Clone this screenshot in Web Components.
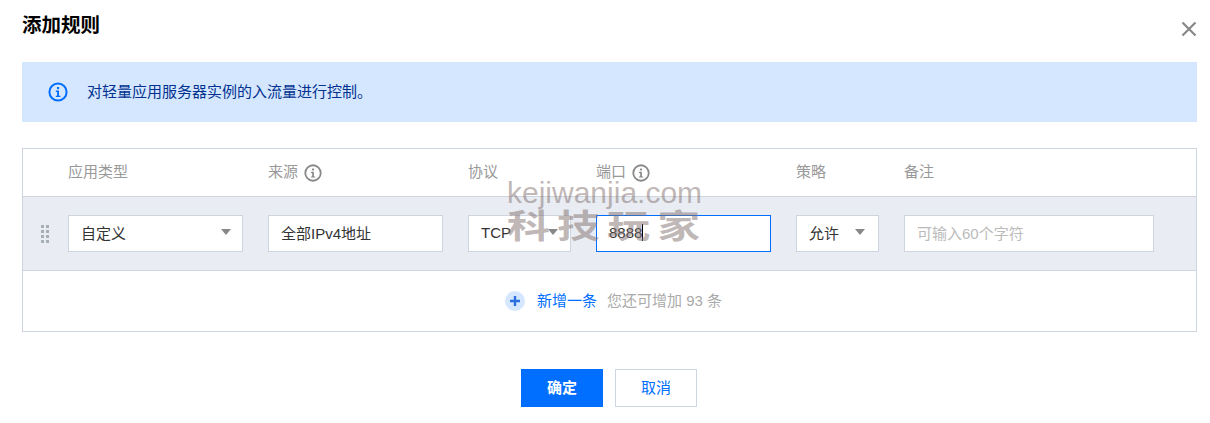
<!DOCTYPE html>
<html lang="zh-CN">
<head>
  <meta charset="UTF-8">
  <title>添加规则</title>
  <style>
    html, body { margin: 0; padding: 0; background: #fff; }
    body { font: 15px "Liberation Sans", "Noto Sans CJK SC", sans-serif; color: #333; }
  </style>
</head>
<body>

  <rule-dialog heading="添加规则">
    <info-banner>对轻量应用服务器实例的入流量进行控制。</info-banner>
    <rule-table>
      <rule-col slot="head" w="175">应用类型</rule-col>
      <rule-col slot="head" w="175" tip>来源</rule-col>
      <rule-col slot="head" w="103">协议</rule-col>
      <rule-col slot="head" w="175" tip>端口</rule-col>
      <rule-col slot="head" w="83">策略</rule-col>
      <rule-col slot="head" w="250">备注</rule-col>

      <tc-select slot="row" w="175" pad="11">自定义</tc-select>
      <tc-input slot="row" w="175">全部IPv4地址</tc-input>
      <tc-select slot="row" w="103" pad="12">TCP</tc-select>
      <tc-input slot="row" w="175" focused>8888</tc-input>
      <tc-select slot="row" w="83" pad="13">允许</tc-select>
      <tc-input slot="row" w="250" placeholder>可输入60个字符</tc-input>

      <add-row slot="foot" left="93"></add-row>
    </rule-table>
    <tc-button slot="actions" primary>确定</tc-button>
    <tc-button slot="actions">取消</tc-button>
  </rule-dialog>

  <script>
    const INFO_SVG = (color, size) => `
      <svg width="${size}" height="${size}" viewBox="0 0 20 20" style="display:block;flex:none">
        <circle cx="10" cy="10" r="8.6" fill="none" stroke="${color}" stroke-width="2"/>
        <rect x="9" y="5" width="2.1" height="2.2" fill="${color}"/>
        <path d="M7.8 8.6H11v5.2h1.4v1.3H7.8v-1.3H9.1V9.9H7.8z" fill="${color}"/>
      </svg>`

    class RuleDialog extends HTMLElement {
      constructor () {
        super()
        const root = this.attachShadow({ mode: 'open' })
        root.innerHTML = `
          <style>
            :host { display: block; position: relative; width: 1210px; height: 423px; padding: 0 13px 0 22px; box-sizing: border-box; overflow: hidden; }
            .head { display: flex; justify-content: space-between; height: 62px; }
            h2 { margin: 13px 0 0; font-size: 19.5px; line-height: 24px; font-weight: 700; color: #000; }
            .close { margin: 19px -2px 0 0; }
            .actions { display: flex; justify-content: center; gap: 12px; margin: 37px 1px 0 0; }
            .mark { position: absolute; left: 507px; top: 177px; color: rgba(130, 112, 112, .5); pointer-events: none; white-space: nowrap; }
            .mark .en { font: 30px/32px "Liberation Sans", sans-serif; }
            .mark .cn { font: 700 33px/36px "Noto Sans CJK SC", sans-serif; letter-spacing: 5.5px; margin-top: -3px; transform: scaleX(1.3); transform-origin: 0 50%; }
          </style>
          <div class="head">
            <h2>${this.getAttribute('heading')}</h2>
            <svg class="close" width="20" height="20" viewBox="0 0 20 20">
              <path d="M3.5 3.5l13 13M16.5 3.5l-13 13" stroke="#888" stroke-width="2.2" fill="none"/>
            </svg>
          </div>
          <slot></slot>
          <div class="actions"><slot name="actions"></slot></div>
          <div class="mark"><div class="en">kejiwanjia.com</div><div class="cn">科技玩家</div></div>`
      }
    }

    class InfoBanner extends HTMLElement {
      constructor () {
        super()
        const root = this.attachShadow({ mode: 'open' })
        root.innerHTML = `
          <style>
            :host { display: flex; align-items: center; gap: 19px; height: 60px; padding-left: 26px; background: #d5e7ff; color: #00318f; }
            span { padding-bottom: 3px; }
          </style>
          ${INFO_SVG('#006eff', 20)}
          <span><slot></slot></span>`
      }
    }

    class RuleTable extends HTMLElement {
      constructor () {
        super()
        const root = this.attachShadow({ mode: 'open' })
        root.innerHTML = `
          <style>
            :host { display: block; margin-top: 26px; border: 1px solid #cfd5de; height: 184px; box-sizing: border-box; }
            .line { display: flex; gap: 25px; padding-left: 45px; align-items: center; }
            .hd { height: 47px; }
            .row { position: relative; height: 75px; background: #e9edf3; border-top: 1px solid #cfd5de; border-bottom: 1px solid #cfd5de; box-sizing: border-box; padding-bottom: 1px; }
            .grip { position: absolute; left: 18px; top: 28px; display: grid; grid-template-columns: 3px 3px; gap: 2px; }
            .grip i { width: 3px; height: 3px; background: #a8aeb5; }
            .foot { display: flex; justify-content: center; align-items: center; height: 60px; }
          </style>
          <div class="line hd"><slot name="head"></slot></div>
          <div class="line row">
            <div class="grip"><i></i><i></i><i></i><i></i><i></i><i></i><i></i><i></i></div>
            <slot name="row"></slot>
          </div>
          <div class="foot"><slot name="foot"></slot></div>`
      }
    }

    class RuleCol extends HTMLElement {
      constructor () {
        super()
        const root = this.attachShadow({ mode: 'open' })
        const tip = this.hasAttribute('tip') ? INFO_SVG('#888', 18) : ''
        root.innerHTML = `
          <style>
            :host { display: flex; align-items: center; gap: 6px; width: ${this.getAttribute('w')}px; color: #999; }
            span { padding-bottom: 4px; }
          </style>
          <span><slot></slot></span>${tip}`
      }
    }

    class TcSelect extends HTMLElement {
      constructor () {
        super()
        const root = this.attachShadow({ mode: 'open' })
        root.innerHTML = `
          <style>
            :host { display: flex; align-items: center; justify-content: space-between; box-sizing: border-box; width: ${this.getAttribute('w')}px; height: 37px; padding: 0 ${this.getAttribute('pad')}px 0 12px; background: #fff; border: 1px solid #cfd5de; color: #333; }
            .text { padding-bottom: 1px; }
            .arrow { width: 0; height: 0; margin-bottom: 2px; border: 5px solid transparent; border-top: 6px solid #888; border-bottom: 0; }
          </style>
          <span class="text"><slot></slot></span><span class="arrow"></span>`
      }
    }

    class TcInput extends HTMLElement {
      constructor () {
        super()
        const root = this.attachShadow({ mode: 'open' })
        const focused = this.hasAttribute('focused')
        const ph = this.hasAttribute('placeholder')
        root.innerHTML = `
          <style>
            :host { display: flex; align-items: center; box-sizing: border-box; width: ${this.getAttribute('w')}px; height: 37px; padding: 0 12px; background: #fff; border: 1px solid ${focused ? '#006eff' : '#cfd5de'}; color: ${ph ? '#bbb' : '#333'}; }
            .text { padding-bottom: 1px; }
            .caret { padding-bottom: 0; margin-bottom: 1px; border-right: 1px solid #000; line-height: 17px; }
          </style>
          <span class="text ${focused ? 'caret' : ''}"><slot></slot></span>`
      }
    }

    class AddRow extends HTMLElement {
      constructor () {
        super()
        const root = this.attachShadow({ mode: 'open' })
        root.innerHTML = `
          <style>
            :host { display: flex; align-items: center; margin-left: 8px; }
            .plus { margin-right: 12px; }
            span { padding-bottom: 3px; }
            .link { color: #006eff; margin-right: 10px; }
            .rest { color: #aaa; }
          </style>
          <svg class="plus" width="20" height="20" viewBox="0 0 20 20">
            <circle cx="10" cy="10" r="10" fill="#d5e7ff"/>
            <path d="M5 10h10M10 5v10" stroke="#2b6fdc" stroke-width="2.4"/>
          </svg>
          <span class="link">新增一条</span>
          <span class="rest">您还可增加 ${this.getAttribute('left')} 条</span>`
      }
    }

    class TcButton extends HTMLElement {
      constructor () {
        super()
        const root = this.attachShadow({ mode: 'open' })
        root.innerHTML = `
          <style>
            :host { display: flex; align-items: center; justify-content: center; box-sizing: border-box; width: 82px; height: 38px; border: 1px solid #cfd5de; background: #fff; color: #006eff; }
            :host([primary]) { border-color: #006eff; background: #006eff; color: #fff; font-weight: 700; }
            span { padding-bottom: 3px; }
          </style>
          <span><slot></slot></span>`
      }
    }

    customElements.define('rule-dialog', RuleDialog)
    customElements.define('info-banner', InfoBanner)
    customElements.define('rule-table', RuleTable)
    customElements.define('rule-col', RuleCol)
    customElements.define('tc-select', TcSelect)
    customElements.define('tc-input', TcInput)
    customElements.define('add-row', AddRow)
    customElements.define('tc-button', TcButton)
  </script>
</body>
</html>
